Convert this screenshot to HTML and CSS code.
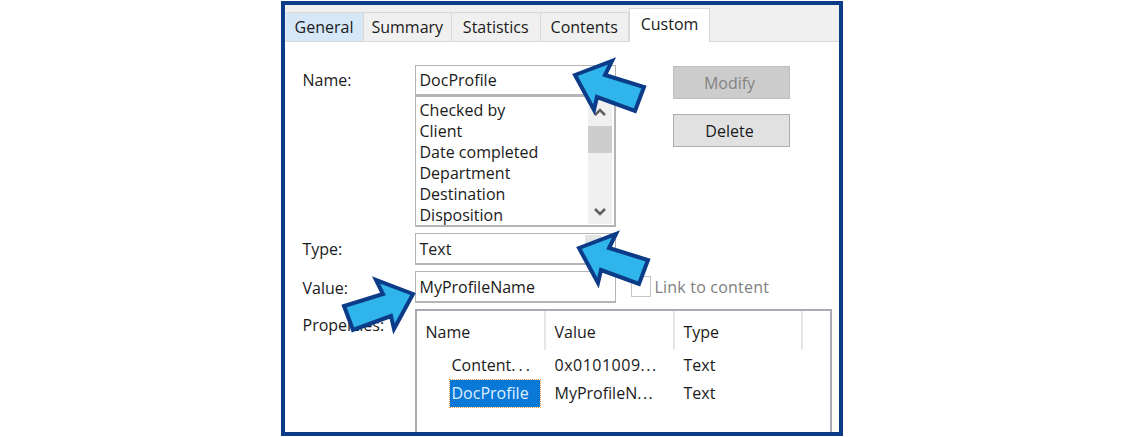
FILE: index.html
```html
<!DOCTYPE html>
<html lang="en">
<head>
    <meta charset="UTF-8">
    <title>Custom properties</title>
    <link rel="stylesheet" href="styles.css">
</head>
<body>
    <div class="dialog">
        <div class="tabs">
            <div class="tab tab-hover">General</div>
            <div class="tab">Summary</div>
            <div class="tab">Statistics</div>
            <div class="tab">Contents</div>
            <div class="tab tab-active">Custom</div>
        </div>
        <div class="form">
            <div class="form-top">
                <div class="fields">
                    <div class="row">
                        <span class="label">Name:</span>
                        <div class="field field-name">DocProfile</div>
                    </div>
                    <div class="row">
                        <span class="label"></span>
                        <div class="list">
                            <div class="list-items">
                                <div>Checked by</div>
                                <div>Client</div>
                                <div>Date completed</div>
                                <div>Department</div>
                                <div>Destination</div>
                                <div>Disposition</div>
                            </div>
                            <div class="scrollbar">
                                <svg class="chevron" viewBox="0 0 14 9"><path d="M2 7L7 2l5 5"/></svg>
                                <div class="thumb"></div>
                                <svg class="chevron chevron-down" viewBox="0 0 14 9"><path d="M2 2l5 5 5-5"/></svg>
                            </div>
                        </div>
                    </div>
                </div>
                <div class="buttons">
                    <div class="btn btn-disabled">Modify</div>
                    <div class="btn">Delete</div>
                </div>
            </div>
            <div class="row row-type">
                <span class="label">Type:</span>
                <div class="field field-type">Text<div class="combo-btn"></div></div>
            </div>
            <div class="row row-value">
                <span class="label">Value:</span>
                <div class="field field-value">MyProfileName</div>
                <div class="link-box"></div>
                <span class="link-text">Link to content</span>
            </div>
            <div class="row row-props">
                <span class="label">Properties:</span>
                <div class="listview">
                    <div class="lv-header">
                        <div class="col col-name">Name</div>
                        <div class="col col-value">Value</div>
                        <div class="col col-type">Type</div>
                    </div>
                    <div class="lv-row">
                        <div class="cell-name"><span class="cell-text">Content<span class="dots">...</span></span></div>
                        <div class="cell-value cell-hex">0x0101009<span class="dots">...</span></div>
                        <div class="cell-type">Text</div>
                    </div>
                    <div class="lv-row">
                        <div class="cell-name"><span class="cell-text selected">DocProfile</span></div>
                        <div class="cell-value">MyProfileN<span class="dots">...</span></div>
                        <div class="cell-type">Text</div>
                    </div>
                </div>
            </div>
        </div>
        <svg class="arrows" viewBox="281 1 562 435" width="562" height="435">
            <defs>
                <polygon id="arrow" points="575,75 612,61 605,75 644,87 635,111 597,97 594,110"/>
            </defs>
            <use href="#arrow"/>
            <use href="#arrow" x="4" y="173"/>
            <use href="#arrow" transform="translate(988 219) scale(-1 1)"/>
        </svg>
    </div>
</body>
</html>
```

FILE: styles.css
```css
body { margin: 0; background-color: white; font-family: "Open Sans", "Noto Sans", sans-serif; font-size: 16px; color: #1a1a1a; }
.dialog {
    position: relative;
    box-sizing: border-box;
    width: 562px;
    height: 435px;
    margin: 1px auto 0;
    border: 4px solid #0c3c87;
    overflow: hidden;
    background-color: white;
}
.tabs {
    display: flex;
    align-items: flex-end;
    height: 37px;
    box-sizing: border-box;
    padding-left: 1px;
    background-color: #f0f0f0;
    border-bottom: 1px solid #d9d9d9;
}
.tab {
    width: 88.5px;
    height: 29px;
    box-sizing: border-box;
    line-height: 28px;
    text-align: center;
    border-top: 1px solid #d9d9d9;
    border-right: 1px solid #d9d9d9;
}
.tab:first-child { width: 78px; }
.tab-hover { background-color: #d6e8f8; }
.tab-active {
    width: 81px;
    height: 34px;
    margin-bottom: -1px;
    line-height: 30px;
    background-color: white;
    border-left: 1px solid #d9d9d9;
}
.form { padding: 23px 0 0 18px; }
.form-top { display: flex; }
.fields { width: 313px; }
.row { display: flex; }
.label { width: 112px; flex: none; line-height: 30px; }
.field {
    position: relative;
    box-sizing: border-box;
    width: 201px;
    padding-left: 4px;
    border: 1px solid #b4b4b8;
    border-bottom-width: 2px;
}
.field-name { height: 31px; line-height: 28px; }
.field-type { height: 32px; line-height: 30px; }
.field-value { height: 32px; line-height: 31px; }
.combo-btn {
    position: absolute;
    right: 14px;
    top: 1px;
    width: 16px;
    height: 20px;
    background-color: #e4e4e4;
}
.list {
    display: flex;
    box-sizing: border-box;
    width: 201px;
    height: 131px;
    padding-left: 4px;
    border: 1px solid #b4b4b8;
    border-bottom-width: 2px;
    border-right-width: 2px;
}
.list-items { flex: 1; line-height: 21px; padding-top: 3px; }
.scrollbar {
    display: flex;
    flex-direction: column;
    align-items: center;
    width: 24px;
    margin: 0 2px 1px 0;
    background-color: #f0f0f0;
}
.chevron { width: 14px; height: 9px; margin-top: 11px; fill: none; stroke: #606060; stroke-width: 2.5; }
.chevron-down { margin-top: auto; margin-bottom: 8px; }
.thumb { width: 24px; height: 27px; margin-top: 9px; background-color: #cdcdcd; }
.buttons { margin-left: 57px; padding-top: 1px; }
.btn {
    box-sizing: border-box;
    width: 117px;
    height: 33px;
    margin-bottom: 15px;
    padding-right: 3px;
    line-height: 33px;
    text-align: center;
    background-color: #e1e1e1;
    border: 1px solid #adadad;
}
.btn-disabled { background-color: #cccccc; border-color: #bfbfbf; color: #838383; }
.row-type { margin-top: 6px; }
.row-type .label { line-height: 32px; }
.row-value { margin-top: 6px; align-items: flex-start; }
.row-value .label { line-height: 34px; }
.link-box {
    width: 20px;
    height: 21px;
    margin: 5px 4px 0 15px;
    box-sizing: border-box;
    border: 1px solid #c4c4c4;
}
.link-text { line-height: 32px; letter-spacing: 0.2px; color: #7f7f7f; }
.row-props { margin-top: 4px; }
.row-props .label { line-height: 32px; }
.listview {
    box-sizing: border-box;
    width: 417px;
    height: 140px;
    border: 2px solid #a9abb4;
}
.lv-header { display: flex; height: 39px; }
.col { box-sizing: border-box; padding-left: 9px; line-height: 42px; border-right: 2px solid #e6e6e6; }
.col-name { width: 129px; }
.col-value { width: 129px; }
.col-type { width: 128px; }
.lv-row { display: flex; height: 28px; line-height: 28px; }
.lv-row:nth-child(2) { margin-top: 1px; }
.cell-name { width: 138px; padding-left: 33px; box-sizing: border-box; }
.cell-value { width: 129px; }
.cell-hex { letter-spacing: 0.5px; }
.cell-type { width: 100px; }
.cell-text { display: inline-block; padding: 0 2px; line-height: 27px; }
.dots { letter-spacing: 3px; }
.cell-value .dots { letter-spacing: 1.5px; }
.selected { padding-right: 11px; background-color: #0a78d7; color: #dff0ff; outline: 1px dotted #e8913a; }
.arrows { position: absolute; left: -4px; top: -4px; }
#arrow { fill: #2fb5ec; stroke: #0c3c87; stroke-width: 4; stroke-miterlimit: 10; }
```
